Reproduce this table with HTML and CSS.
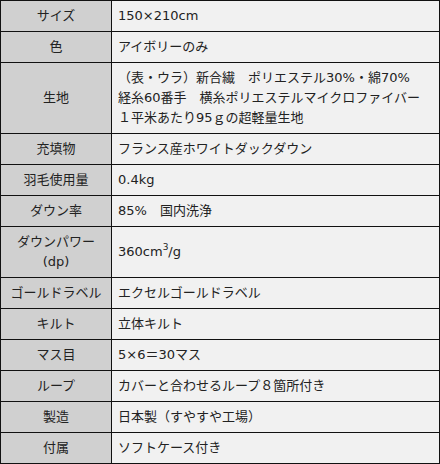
FILE: index.html
```html
<!DOCTYPE html>
<html lang="ja">
<head>
<meta charset="utf-8">
<link rel="stylesheet" href="styles.css">
</head>
<body>
<table class="spec">
  <tr><th>サイズ</th><td>150×210cm</td></tr>
  <tr><th>色</th><td>アイボリーのみ</td></tr>
  <tr><th>生地</th><td>（表・ウラ）新合繊　ポリエステル30%・綿70%<br>経糸60番手　横糸ポリエステルマイクロファイバー<br>１平米あたり95ｇの超軽量生地</td></tr>
  <tr><th>充填物</th><td>フランス産ホワイトダックダウン</td></tr>
  <tr><th>羽毛使用量</th><td>0.4kg</td></tr>
  <tr><th>ダウン率</th><td>85%　国内洗浄</td></tr>
  <tr><th>ダウンパワー<br>(dp)</th><td>360cm<sup>3</sup>/g</td></tr>
  <tr><th>ゴールドラベル</th><td>エクセルゴールドラベル</td></tr>
  <tr><th>キルト</th><td>立体キルト</td></tr>
  <tr><th>マス目</th><td>5×6＝30マス</td></tr>
  <tr><th>ループ</th><td>カバーと合わせるループ８箇所付き</td></tr>
  <tr><th>製造</th><td>日本製（すやすや工場）</td></tr>
  <tr><th>付属</th><td>ソフトケース付き</td></tr>
</table>
</body>
</html>
```
FILE: styles.css
```css
html, body {
  margin: 0;
  padding: 0;
  background: #ffffff;
}
.spec {
  border-collapse: collapse;
  width: 440px;
  font-family: "DejaVu Sans", "Noto Sans CJK JP", sans-serif;
  font-size: 13px;
  line-height: 20px;
  color: #222222;
}
.spec th,
.spec td {
  border: 1px solid #111111;
  padding: 5px 6px;
  vertical-align: middle;
}
.spec th {
  width: 106px;
  background: #d0d0d0;
  font-weight: normal;
  text-align: center;
  padding: 5px 2px;
}
.spec td {
  background: #f1f1f1;
  text-align: left;
}
.spec sup {
  font-size: 9px;
  line-height: 0;
  vertical-align: 6px;
}
```
